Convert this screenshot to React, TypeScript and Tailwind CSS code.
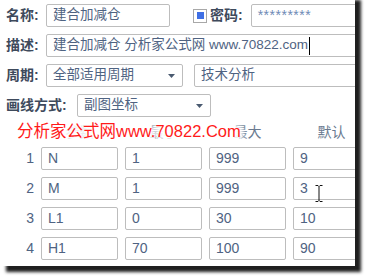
import React from "react";

const font = "font-['Liberation_Sans','Noto_Sans_CJK_SC',sans-serif]";

function Box({
  className = "",
  children,
}: {
  className?: string;
  children?: React.ReactNode;
}) {
  return (
    <div
      className={`h-[23px] shrink-0 flex items-center border border-[#bdbdbd] rounded-[2px] bg-white pl-[6px] text-[#4f6382] whitespace-nowrap overflow-hidden ${className}`}
    >
      {children}
    </div>
  );
}

function Select({ className = "", value }: { className?: string; value: string }) {
  return (
    <Box className={`justify-between pr-[7px] ${className}`}>
      <span>{value}</span>
      <svg width="7" height="4" viewBox="0 0 7 4">
        <path d="M0 0 H7 L3.5 4 Z" fill="#4a5a70" />
      </svg>
    </Box>
  );
}

function Label({ text, className = "" }: { text: string; className?: string }) {
  return (
    <span className={`shrink-0 text-[14px] font-bold text-[#3e4a5c] ${className}`}>{text}</span>
  );
}

const params = [
  ["N", "1", "999", "9"],
  ["M", "1", "999", "3"],
  ["L1", "0", "30", "10"],
  ["H1", "70", "100", "90"],
];

export default function App() {
  return (
    <div className={`w-[365px] h-[277px] bg-white overflow-hidden ${font}`}>
      <div className="relative -mt-[6px] w-[355px] h-[272px] bg-white shadow-[6px_6px_3px_rgba(0,0,0,0.88)] overflow-hidden pt-[10px] pl-[6px]">
        <div className="flex flex-col gap-[7px] text-[13.5px]">
          {/* 名称 / 密码 */}
          <div className="flex items-center h-[23px]">
            <Label text="名称:" className="w-[40px]" />
            <Box className="w-[124px]">建合加减仓</Box>
            <div className="ml-[23px] w-[14px] h-[14px] border border-[#a8a8a8] bg-white flex items-center justify-center shrink-0">
              <div className="w-[7px] h-[7px] bg-[#3f6fe5]" />
            </div>
            <Label text="密码:" className="ml-[3px]" />
            <Box className="ml-[8px] w-[130px] text-[#6f8ab5] text-[14px] tracking-[0.5px]">*********</Box>
          </div>

          {/* 描述 */}
          <div className="flex items-center h-[23px]">
            <Label text="描述:" className="w-[40px]" />
            <Box className="w-[320px]">
              <span>建合加减仓 分析家公式网 www.70822.com</span>
              <span className="ml-[1px] w-px h-[18px] bg-black" />
            </Box>
          </div>

          {/* 周期 */}
          <div className="flex items-center h-[23px]">
            <Label text="周期:" className="w-[40px]" />
            <Select className="w-[137px]" value="全部适用周期" />
            <Box className="ml-[11px] w-[180px]">技术分析</Box>
          </div>

          {/* 画线方式 */}
          <div className="flex items-center h-[23px]">
            <Label text="画线方式:" className="w-[71px]" />
            <Select className="w-[134px]" value="副图坐标" />
          </div>
        </div>

        {/* header */}
        <div className="flex items-center h-[30px] text-[14px] text-[#6a7a90]">
          <span className="w-[28px] shrink-0" />
          <div className="ml-[7px] flex gap-[7px] shrink-0">
            {["参数", "最小", "最大", "默认"].map((h) => (
              <span key={h} className="w-[77px] shrink-0 text-center">
                {h}
              </span>
            ))}
          </div>
        </div>

        {/* params */}
        <div className="flex flex-col gap-[7px] text-[14px]">
          {params.map((row, i) => (
            <div key={i} className="flex items-center h-[23px]">
              <span className="w-[28px] shrink-0 text-right text-[#4f6382]">{i + 1}</span>
              <div className="ml-[7px] flex gap-[7px] shrink-0">
                {row.map((v, j) => (
                  <Box key={j} className="w-[77px]">
                    {v}
                  </Box>
                ))}
              </div>
            </div>
          ))}
        </div>

        {/* watermark */}
        <div className="absolute left-[17px] top-[127px] text-[16.5px] leading-[20px] text-[#ff1a1a] whitespace-nowrap [text-shadow:0_0_3px_#fff,0_0_3px_#fff,0_0_4px_#fff,0_0_4px_#fff,0_0_6px_#fff,0_0_6px_#fff,0_0_8px_#fff,0_0_8px_#fff,0_3px_4px_#fff,0_4px_5px_#fff,4px_0_4px_#fff,-4px_0_4px_#fff]">
          分析家公式网www.70822.Com
        </div>

        {/* I-beam cursor */}
        <svg className="absolute left-[315px] top-[191px]" width="8" height="17" viewBox="0 0 8 17">
          <path
            d="M0.5 0.5 H3 L4 1.5 L5 0.5 H7.5 M4 1.5 V15.5 M0.5 16.5 H3 L4 15.5 L5 16.5 H7.5"
            stroke="#111"
            strokeWidth="1"
            fill="none"
          />
        </svg>
      </div>
    </div>
  );
}
